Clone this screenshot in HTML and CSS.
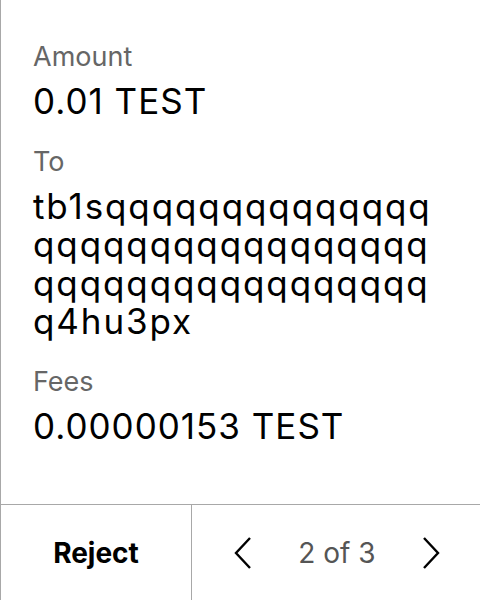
FILE: index.html
```html
<!DOCTYPE html>
<html>
<head>
<meta charset="utf-8">
<link rel="stylesheet" href="styles.css">
</head>
<body>
<div class="screen">
  <div class="details">
    <div class="field">
      <div class="label">Amount</div>
      <div class="value">0.01 TEST</div>
    </div>
    <div class="field">
      <div class="label">To</div>
      <div class="value address">tb1sqqqqqqqqqqqqqqqqqqqqqqqqqqqqqqqqqqqqqqqqqqqqqqqqq4hu3px</div>
    </div>
    <div class="field">
      <div class="label">Fees</div>
      <div class="value">0.00000153 TEST</div>
    </div>
  </div>
  <div class="footer">
    <div class="reject">Reject</div>
    <div class="pager">
      <svg class="chev" width="18" height="32" viewBox="0 0 18 32"><path d="M16 1 L2 16 L16 31" fill="none" stroke="#000" stroke-width="2.4"/></svg>
      <span class="count">2 of 3</span>
      <svg class="chev" width="18" height="32" viewBox="0 0 18 32"><path d="M2 1 L16 16 L2 31" fill="none" stroke="#000" stroke-width="2.4"/></svg>
    </div>
  </div>
</div>
</body>
</html>
```
FILE: styles.css
```css
html, body {
  margin: 0;
  padding: 0;
  background: #fff;
}
body {
  font-family: Inter, "Noto Sans", sans-serif;
  color: #000;
}
.screen {
  width: 479px;
  height: 600px;
  border-left: 1px solid #a8a8a8;
  display: flex;
  flex-direction: column;
}
.details {
  flex: 1;
  padding: 41px 40px 0 32px;
  display: flex;
  flex-direction: column;
  gap: 25px;
}
.label {
  font-size: 27px;
  line-height: 32px;
  color: #666;
  margin-bottom: 9px;
}
.value {
  font-size: 35px;
  line-height: 38.5px;
  letter-spacing: 1px;
}
.address {
  word-break: break-all;
  letter-spacing: 1.9px;
}
.footer {
  height: 95px;
  border-top: 1px solid #a8a8a8;
  display: grid;
  grid-template-columns: 191px 1fr;
}
.reject {
  border-right: 1px solid #a8a8a8;
  display: flex;
  align-items: center;
  justify-content: center;
  font-size: 28px;
  font-weight: 700;
}
.pager {
  display: flex;
  align-items: center;
  justify-content: space-between;
  padding: 0 40px 0 42px;
}
.count {
  font-size: 28px;
  color: #555;
}
.chev {
  display: block;
}
```
